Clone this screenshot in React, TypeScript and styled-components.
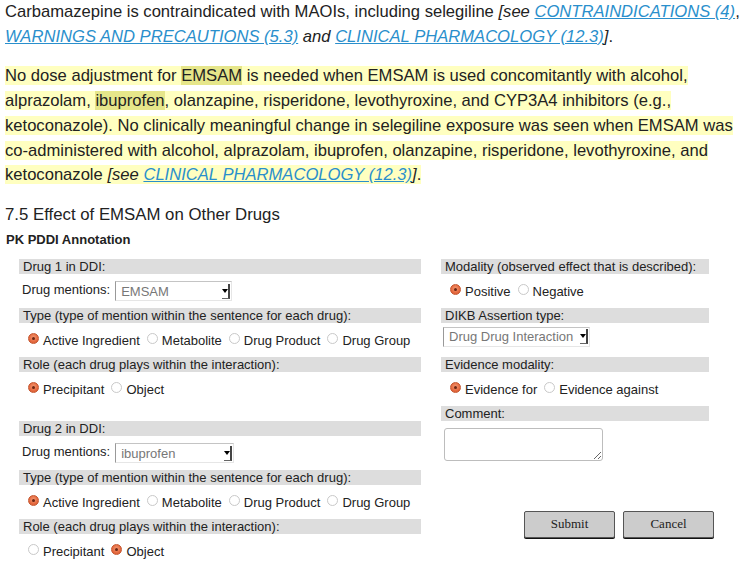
import React from "react";
import styled, { createGlobalStyle } from "styled-components";

const GlobalStyle = createGlobalStyle`
  html, body { margin: 0; padding: 0; background: #fff; }
  body {
    font-family: "Liberation Sans", Arial, sans-serif;
    color: #222;
  }
`;

const Page = styled.div`
  padding: 0 5px;
  width: 741px;
`;

const Para = styled.p`
  font-size: 16.6px;
  line-height: 24.7px;
  margin: 0 0 15px;
`;

const Ital = styled.span`
  font-style: italic;
`;

const Link = styled.a`
  font-style: italic;
  color: #2a8fcc;
  text-decoration: underline;
`;

const Hl = styled.span<{ $strong?: boolean }>`
  background: ${(p) => (p.$strong ? "#e6e68a" : "#ffffc0")};
`;

const Heading = styled.h3`
  font-size: 16.8px;
  font-weight: normal;
  line-height: 24px;
  margin: 0;
`;

const SubHeading = styled.h4`
  font-size: 13px;
  font-weight: bold;
  line-height: 16px;
  margin: 5px 0 11px 1px;
`;

const Form = styled.div`
  display: flex;
  gap: 20px;
  padding-left: 14px;
  font-size: 13px;
`;

const Column = styled.div<{ $w: number }>`
  width: ${(p) => p.$w}px;
  display: flex;
  flex-direction: column;
`;

const Bar = styled.div`
  background: #dddddd;
  height: 15px;
  line-height: 15px;
  padding-left: 4px;
  color: #222;
`;

const Row = styled.div`
  height: 34px;
  display: flex;
  align-items: center;
  padding-left: 9px;
  padding-top: 1px;
  box-sizing: border-box;
`;

const SelectRow = styled.div<{ $top?: boolean }>`
  height: 34px;
  display: flex;
  align-items: ${(p) => (p.$top ? "flex-start" : "center")};
  padding-top: ${(p) => (p.$top ? "4px" : "1px")};
  box-sizing: border-box;
  padding-left: ${(p) => (p.$top ? "2px" : "3px")};
`;

const Spacer = styled.div`
  height: 15px;
`;

const FieldLabel = styled.span`
  margin-right: 5px;
  position: relative;
  top: -2px;
`;

const SelectBox = styled.div<{ $w: number }>`
  width: ${(p) => p.$w}px;
  height: 20px;
  box-sizing: border-box;
  border: 1px solid #e6e6e6;
  border-left-color: #999;
  border-top-color: #c4c4c4;
  background: #fff;
  display: flex;
  align-items: center;
  padding-left: 5px;
  color: #777;
`;

const SelectValue = styled.span`
  flex: 1;
`;

const ArrowBtn = styled.span`
  width: 6px;
  height: 14px;
  margin-right: 1px;
  border-right: 2px solid #444;
  border-bottom: 1px solid #666;
  display: flex;
  align-items: center;
  justify-content: center;
  &::after {
    content: "";
    border-left: 3px solid transparent;
    border-right: 3px solid transparent;
    border-top: 4px solid #000;
  }
`;

const Option = styled.label`
  display: inline-flex;
  align-items: center;
  margin-right: 7px;
  white-space: nowrap;
`;

const RadioDot = styled.span<{ $on?: boolean }>`
  width: 11px;
  height: 11px;
  box-sizing: border-box;
  border-radius: 50%;
  margin-right: 4px;
  position: relative;
  top: -2px;
  border: 1px solid ${(p) => (p.$on ? "#c4562f" : "#c9c9c9")};
  background: ${(p) =>
    p.$on ? "radial-gradient(circle at 50% 40%, #f39a74 0%, #e5693f 60%, #d2542b 100%)" : "#fff"};
  &::after {
    content: "";
    display: ${(p) => (p.$on ? "block" : "none")};
    position: absolute;
    left: 3px;
    top: 3px;
    width: 3px;
    height: 3px;
    border-radius: 50%;
    background: #6b2612;
  }
`;

const Comment = styled.textarea`
  width: 159px;
  height: 33px;
  box-sizing: border-box;
  margin: 7px 0 0 3px;
  border: 1px solid #bdbdbd;
  border-radius: 3px;
  font-family: "Liberation Sans", Arial, sans-serif;
  font-size: 13px;
`;

const ButtonRow = styled.div`
  display: flex;
  gap: 8px;
  margin-top: 50px;
  padding-left: 83px;
`;

const Btn = styled.button`
  flex-shrink: 0;
  width: 91px;
  height: 27px;
  background: #cccccc;
  border: 1px solid #555;
  border-radius: 2px;
  box-shadow: 0 1px 0 #111;
  font-family: "Liberation Serif", "Times New Roman", serif;
  font-size: 13px;
  font-weight: 400;
  color: #222;
  padding: 0;
`;

type Opt = { label: string; on?: boolean };

const Radios = ({ opts }: { opts: Opt[] }) => (
  <Row>
    {opts.map((o) => (
      <Option key={o.label}>
        <RadioDot $on={o.on} />
        {o.label}
      </Option>
    ))}
  </Row>
);

const Select = ({ value, w }: { value: string; w: number }) => (
  <SelectBox $w={w}>
    <SelectValue>{value}</SelectValue>
    <ArrowBtn />
  </SelectBox>
);

const DrugBlock = ({
  n,
  drug,
  w,
  precip,
}: {
  n: number;
  drug: string;
  w: number;
  precip: boolean;
}) => (
  <>
    <Bar>Drug {n} in DDI:</Bar>
    <SelectRow>
      <FieldLabel>Drug mentions:</FieldLabel>
      <Select value={drug} w={w} />
    </SelectRow>
    <Bar>Type (type of mention within the sentence for each drug):</Bar>
    <Radios
      opts={[
        { label: "Active Ingredient", on: true },
        { label: "Metabolite" },
        { label: "Drug Product" },
        { label: "Drug Group" },
      ]}
    />
    <Bar>Role (each drug plays within the interaction):</Bar>
    <Radios
      opts={[
        { label: "Precipitant", on: precip },
        { label: "Object", on: !precip },
      ]}
    />
  </>
);

export default function App() {
  return (
    <Page>
      <GlobalStyle />
      <Para>
        Carbamazepine is contraindicated with MAOIs, including selegiline{" "}
        <Ital>[see </Ital>
        <Link>CONTRAINDICATIONS (4)</Link>, <Link>WARNINGS AND PRECAUTIONS (5.3)</Link>{" "}
        <Ital>and</Ital> <Link>CLINICAL PHARMACOLOGY (12.3)</Link>
        <Ital>]</Ital>.
      </Para>
      <Para>
        <Hl>
          No dose adjustment for <Hl $strong>EMSAM</Hl> is needed when EMSAM is used concomitantly
          with alcohol, alprazolam, <Hl $strong>ibuprofen</Hl>, olanzapine, risperidone,
          levothyroxine, and CYP3A4 inhibitors (e.g., ketoconazole). No clinically meaningful
          change in selegiline exposure was seen when EMSAM was co-administered with alcohol,
          alprazolam, ibuprofen, olanzapine, risperidone, levothyroxine, and ketoconazole{" "}
          <Ital>[see </Ital>
          <Link>CLINICAL PHARMACOLOGY (12.3)</Link>
          <Ital>]</Ital>.
        </Hl>
      </Para>
      <Heading>7.5 Effect of EMSAM on Other Drugs</Heading>
      <SubHeading>PK PDDI Annotation</SubHeading>
      <Form>
        <Column $w={402}>
          <DrugBlock n={1} drug="EMSAM" w={117} precip={true} />
          <Spacer />
          <DrugBlock n={2} drug="ibuprofen" w={119} precip={false} />
        </Column>
        <Column $w={268}>
          <Bar>Modality (observed effect that is described):</Bar>
          <Radios opts={[{ label: "Positive", on: true }, { label: "Negative" }]} />
          <Bar>DIKB Assertion type:</Bar>
          <SelectRow $top>
            <Select value="Drug Drug Interaction" w={147} />
          </SelectRow>
          <Bar>Evidence modality:</Bar>
          <Radios
            opts={[{ label: "Evidence for", on: true }, { label: "Evidence against" }]}
          />
          <Bar>Comment:</Bar>
          <Comment />
          <ButtonRow>
            <Btn>Submit</Btn>
            <Btn>Cancel</Btn>
          </ButtonRow>
        </Column>
      </Form>
    </Page>
  );
}
